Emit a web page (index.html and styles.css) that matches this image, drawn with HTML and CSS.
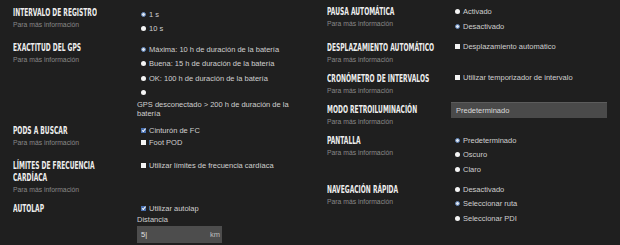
FILE: index.html
```html
<!DOCTYPE html>
<html lang="es">
<head>
    <meta charset="utf-8">
    <title>Configuración</title>
    <link rel="stylesheet" href="styles.css">
</head>
<body>
    <div class="settings">

        <div class="col col-left">

            <div class="row row-log">
                <div class="label">
                    <h3>INTERVALO DE REGISTRO</h3>
                    <p>Para más información</p>
                </div>
                <div class="opts">
                    <div class="opt"><span class="radio on"></span>1 s</div>
                    <div class="opt"><span class="radio"></span>10 s</div>
                </div>
            </div>

            <div class="row row-gps">
                <div class="label">
                    <h3>EXACTITUD DEL GPS</h3>
                    <p>Para más información</p>
                </div>
                <div class="opts">
                    <div class="opt"><span class="radio on"></span>Máxima: 10 h de duración de la batería</div>
                    <div class="opt"><span class="radio"></span>Buena: 15 h de duración de la batería</div>
                    <div class="opt"><span class="radio"></span>OK: 100 h de duración de la batería</div>
                    <div class="opt opt-wrap"><span class="radio"></span><span class="wrap-text">GPS desconectado &gt; 200 h de duración de la batería</span></div>
                </div>
            </div>

            <div class="row row-pods">
                <div class="label">
                    <h3>PODS A BUSCAR</h3>
                    <p>Para más información</p>
                </div>
                <div class="opts checks">
                    <div class="opt"><span class="check on"></span>Cinturón de FC</div>
                    <div class="opt"><span class="check"></span>Foot POD</div>
                </div>
            </div>

            <div class="row row-hr">
                <div class="label">
                    <h3>LÍMITES DE FRECUENCIA CARDÍACA</h3>
                    <p>Para más información</p>
                </div>
                <div class="opts checks">
                    <div class="opt"><span class="check"></span>Utilizar límites de frecuencia cardíaca</div>
                </div>
            </div>

            <div class="row row-lap">
                <div class="label">
                    <h3>AUTOLAP</h3>
                </div>
                <div class="opts checks">
                    <div class="opt"><span class="check on"></span>Utilizar autolap</div>
                    <div class="field-name">Distancia</div>
                    <div class="input"><span>5|</span><span class="unit">km</span></div>
                </div>
            </div>

        </div>

        <div class="col col-right">

            <div class="row row-pause">
                <div class="label">
                    <h3>PAUSA AUTOMÁTICA</h3>
                    <p>Para más información</p>
                </div>
                <div class="opts">
                    <div class="opt"><span class="radio"></span>Activado</div>
                    <div class="opt"><span class="radio on"></span>Desactivado</div>
                </div>
            </div>

            <div class="row row-scroll">
                <div class="label">
                    <h3>DESPLAZAMIENTO AUTOMÁTICO</h3>
                    <p>Para más información</p>
                </div>
                <div class="opts checks">
                    <div class="opt"><span class="check"></span>Desplazamiento automático</div>
                </div>
            </div>

            <div class="row row-timer">
                <div class="label">
                    <h3>CRONÓMETRO DE INTERVALOS</h3>
                    <p>Para más información</p>
                </div>
                <div class="opts checks">
                    <div class="opt"><span class="check"></span>Utilizar temporizador de intervalo</div>
                </div>
            </div>

            <div class="row row-light">
                <div class="label">
                    <h3>MODO RETROILUMINACIÓN</h3>
                    <p>Para más información</p>
                </div>
                <div class="opts">
                    <div class="select">Predeterminado</div>
                </div>
            </div>

            <div class="row row-screen">
                <div class="label">
                    <h3>PANTALLA</h3>
                    <p>Para más información</p>
                </div>
                <div class="opts">
                    <div class="opt"><span class="radio on"></span>Predeterminado</div>
                    <div class="opt"><span class="radio"></span>Oscuro</div>
                    <div class="opt"><span class="radio"></span>Claro</div>
                </div>
            </div>

            <div class="row row-nav">
                <div class="label">
                    <h3>NAVEGACIÓN RÁPIDA</h3>
                    <p>Para más información</p>
                </div>
                <div class="opts">
                    <div class="opt"><span class="radio"></span>Desactivado</div>
                    <div class="opt"><span class="radio on"></span>Seleccionar ruta</div>
                    <div class="opt"><span class="radio"></span>Seleccionar PDI</div>
                </div>
            </div>

        </div>

    </div>
</body>
</html>
```

FILE: styles.css
```css
* {
    margin: 0;
    padding: 0;
    box-sizing: border-box;
}

body {
    background: #1f1f1f;
    font-family: "Liberation Sans", Arial, sans-serif;
    color: #d0d0d0;
    width: 620px;
    height: 245px;
    overflow: hidden;
}

.settings {
    display: grid;
    grid-template-columns: 314px 306px;
}

.col {
    padding-left: 13px;
}

.col-left {
    padding-top: 7px;
}

.col-right {
    padding-top: 6px;
}

.row {
    display: flex;
}

.label {
    width: 124px;
    flex-shrink: 0;
}

.label h3 {
    font-family: "DejaVu Sans Condensed", "DejaVu Sans", sans-serif;
    font-weight: bold;
    font-size: 11px;
    line-height: 12px;
    color: #ededed;
    width: 187px;
    transform: scaleX(0.6);
    transform-origin: left top;
}

.label p {
    font-size: 6.8px;
    line-height: 10px;
    margin-top: 1px;
    color: #888;
}

.opts {
    font-size: 7.5px;
    color: #cfcfcf;
}

.col-right .opts {
    margin-top: -1.5px;
}

.opt {
    display: flex;
    align-items: center;
    height: 14.5px;
}

.checks .opt {
    height: 12px;
}

.radio {
    width: 5px;
    height: 5px;
    border-radius: 50%;
    background: #f4f4f4;
    margin: 0 3px 0 4px;
    flex-shrink: 0;
}

.radio.on {
    background: #dfe6f0;
    border: 1.5px solid #5a7fb4;
}

.check {
    position: relative;
    width: 5px;
    height: 5px;
    background: #f4f4f4;
    margin: 0 3px 0 4px;
    flex-shrink: 0;
}

.check.on {
    background: #4a71b0;
}

.check.on::after {
    content: "";
    position: absolute;
    left: 1.5px;
    top: 0.3px;
    width: 1.2px;
    height: 2.6px;
    border-right: 1px solid #fff;
    border-bottom: 1px solid #fff;
    transform: rotate(40deg);
}

.opt-wrap {
    display: block;
    height: auto;
    padding-top: 4px;
}

.opt-wrap .radio {
    display: block;
    margin-bottom: 5px;
}

.wrap-text {
    display: block;
    width: 160px;
    line-height: 9.5px;
}

/* separacion entre filas */
.row-log { margin-bottom: 6px; }
.row-gps { margin-bottom: 6px; }
.row-pods { margin-bottom: 11px; }
.row-hr { margin-bottom: 8px; }

.row-pause { margin-bottom: 8px; }
.row-scroll { margin-bottom: 8px; }
.row-timer { margin-bottom: 8px; }
.row-light { margin-bottom: 8px; }
.row-screen { margin-bottom: 7px; }

.field-name {
    font-size: 7.5px;
    line-height: 10px;
}

.input {
    width: 85px;
    height: 17px;
    background: #4d4d4d;
    display: flex;
    justify-content: space-between;
    align-items: center;
    padding: 0 2px 0 4px;
    color: #e0e0e0;
    margin-top: 1px;
}

.unit {
    color: #bdbdbd;
}

.select {
    width: 156px;
    height: 16px;
    background: #4a4a4a;
    border-top: 1px solid #5c5c5c;
    color: #dadada;
    padding-left: 5px;
    line-height: 15px;
}
```
